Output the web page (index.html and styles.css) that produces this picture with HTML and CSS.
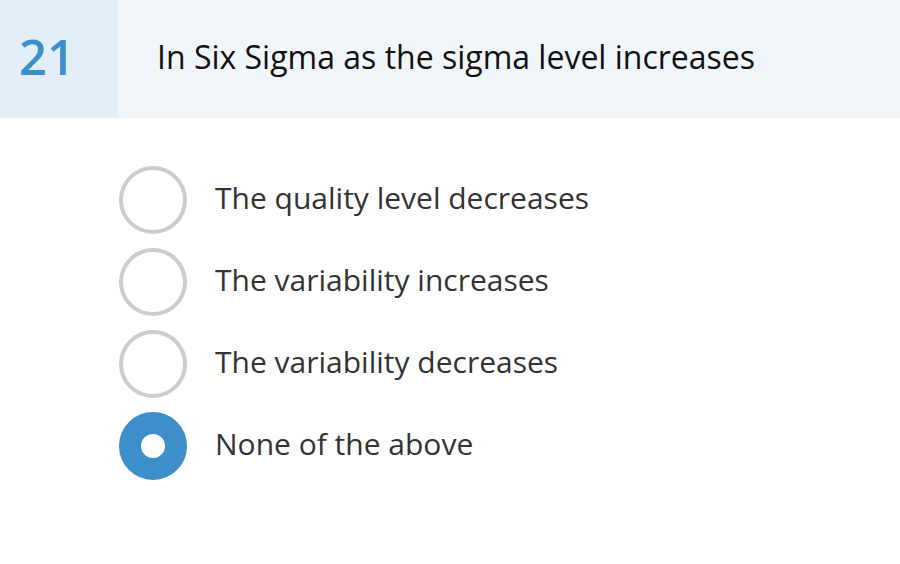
FILE: index.html
```html
<!DOCTYPE html>
<html>
<head>
<meta charset="utf-8">
<link rel="stylesheet" href="styles.css">
</head>
<body>
<div class="question">
  <div class="num">21</div>
  <div class="qtext">In Six Sigma as the sigma level increases</div>
</div>
<div class="options">
  <div class="option"><span class="radio"></span><span class="label">The quality level decreases</span></div>
  <div class="option"><span class="radio"></span><span class="label">The variability increases</span></div>
  <div class="option"><span class="radio"></span><span class="label">The variability decreases</span></div>
  <div class="option"><span class="radio checked"></span><span class="label">None of the above</span></div>
</div>
</body>
</html>
```
FILE: styles.css
```css
html, body {
  margin: 0;
  padding: 0;
  background: #ffffff;
  font-family: "Open Sans", "Noto Sans", sans-serif;
}
.question {
  display: flex;
  height: 118px;
  background: #f1f6fb;
}
.num {
  width: 118px;
  flex: none;
  background: #e3eef8;
  color: #3d8fcc;
  font-size: 49px;
  font-weight: 600;
  display: flex;
  align-items: center;
  padding: 0 0 6px 19px;
  box-sizing: border-box;
}
.qtext {
  display: flex;
  align-items: center;
  padding: 0 0 6px 39px;
  font-size: 32px;
  color: #111111;
}
.options {
  display: flex;
  flex-direction: column;
  gap: 14px;
  padding: 48px 0 0 119px;
}
.option {
  display: flex;
  align-items: center;
  height: 68px;
}
.radio {
  width: 68px;
  height: 68px;
  box-sizing: border-box;
  border: 4px solid #cccccc;
  border-radius: 50%;
  flex: none;
}
.radio.checked {
  border: 22px solid #3d8fcc;
  background: #ffffff;
}
.label {
  margin-left: 28px;
  padding-bottom: 5px;
  font-size: 30px;
  color: #333333;
}
```
